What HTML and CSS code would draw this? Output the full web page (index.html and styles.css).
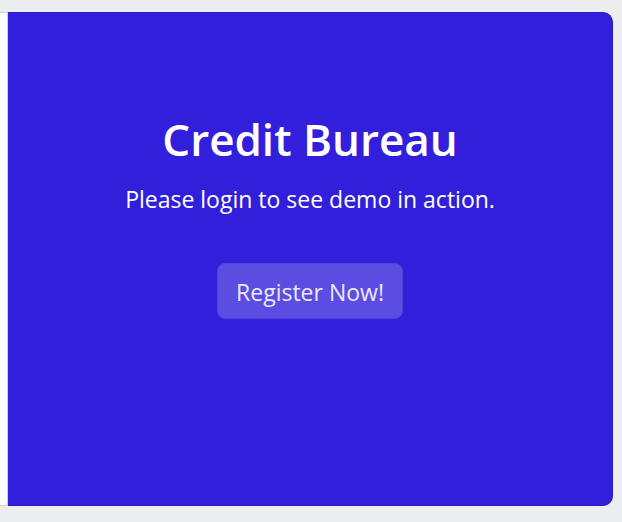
FILE: index.html
```html
<!DOCTYPE html>
<html lang="en">
<head>
<meta charset="utf-8">
<title>Credit Bureau</title>
<link rel="stylesheet" href="styles.css">
</head>
<body>
<main class="card-group">
<div class="login-edge"></div>
<section class="promo">
<h1 class="promo-title">Credit Bureau</h1>
<p class="promo-text">Please login to see demo in action.</p>
<button class="promo-button" type="button">Register Now!</button>
</section>
</main>
</body>
</html>
```
FILE: styles.css
```css
* {
  box-sizing: border-box;
}

body {
  margin: 0;
  min-height: 100vh;
  padding: 12px 9px 16px 0;
  display: flex;
  background: #ebedef;
  font-family: "Segoe UI", "Open Sans", "Noto Sans", sans-serif;
}

.card-group {
  flex: 1;
  display: flex;
}

.login-edge {
  width: 8px;
  background: #fff;
  border: 1px solid #cccdd6;
  border-left: 0;
}

.promo {
  flex: 1;
  display: flex;
  flex-direction: column;
  align-items: center;
  padding: 98px 16px 16px;
  border: 1px solid #2c1bc4;
  border-left: 0;
  border-radius: 0 10px 10px 0;
  background: #321fdb;
  color: #fff;
  text-align: center;
}

.promo-title {
  margin: 0 0 14px;
  font-size: 44px;
  line-height: 56px;
  font-weight: 600;
}

.promo-text {
  margin: 0;
  font-size: 23px;
  line-height: 36px;
}

.promo-button {
  margin-top: 46px;
  padding: 10px 18px 8px;
  border: 1px solid #5040df;
  border-radius: 8px;
  background: #5b4ce2;
  color: #ebe9fb;
  font: inherit;
  font-size: 23px;
  line-height: 36px;
}
```
